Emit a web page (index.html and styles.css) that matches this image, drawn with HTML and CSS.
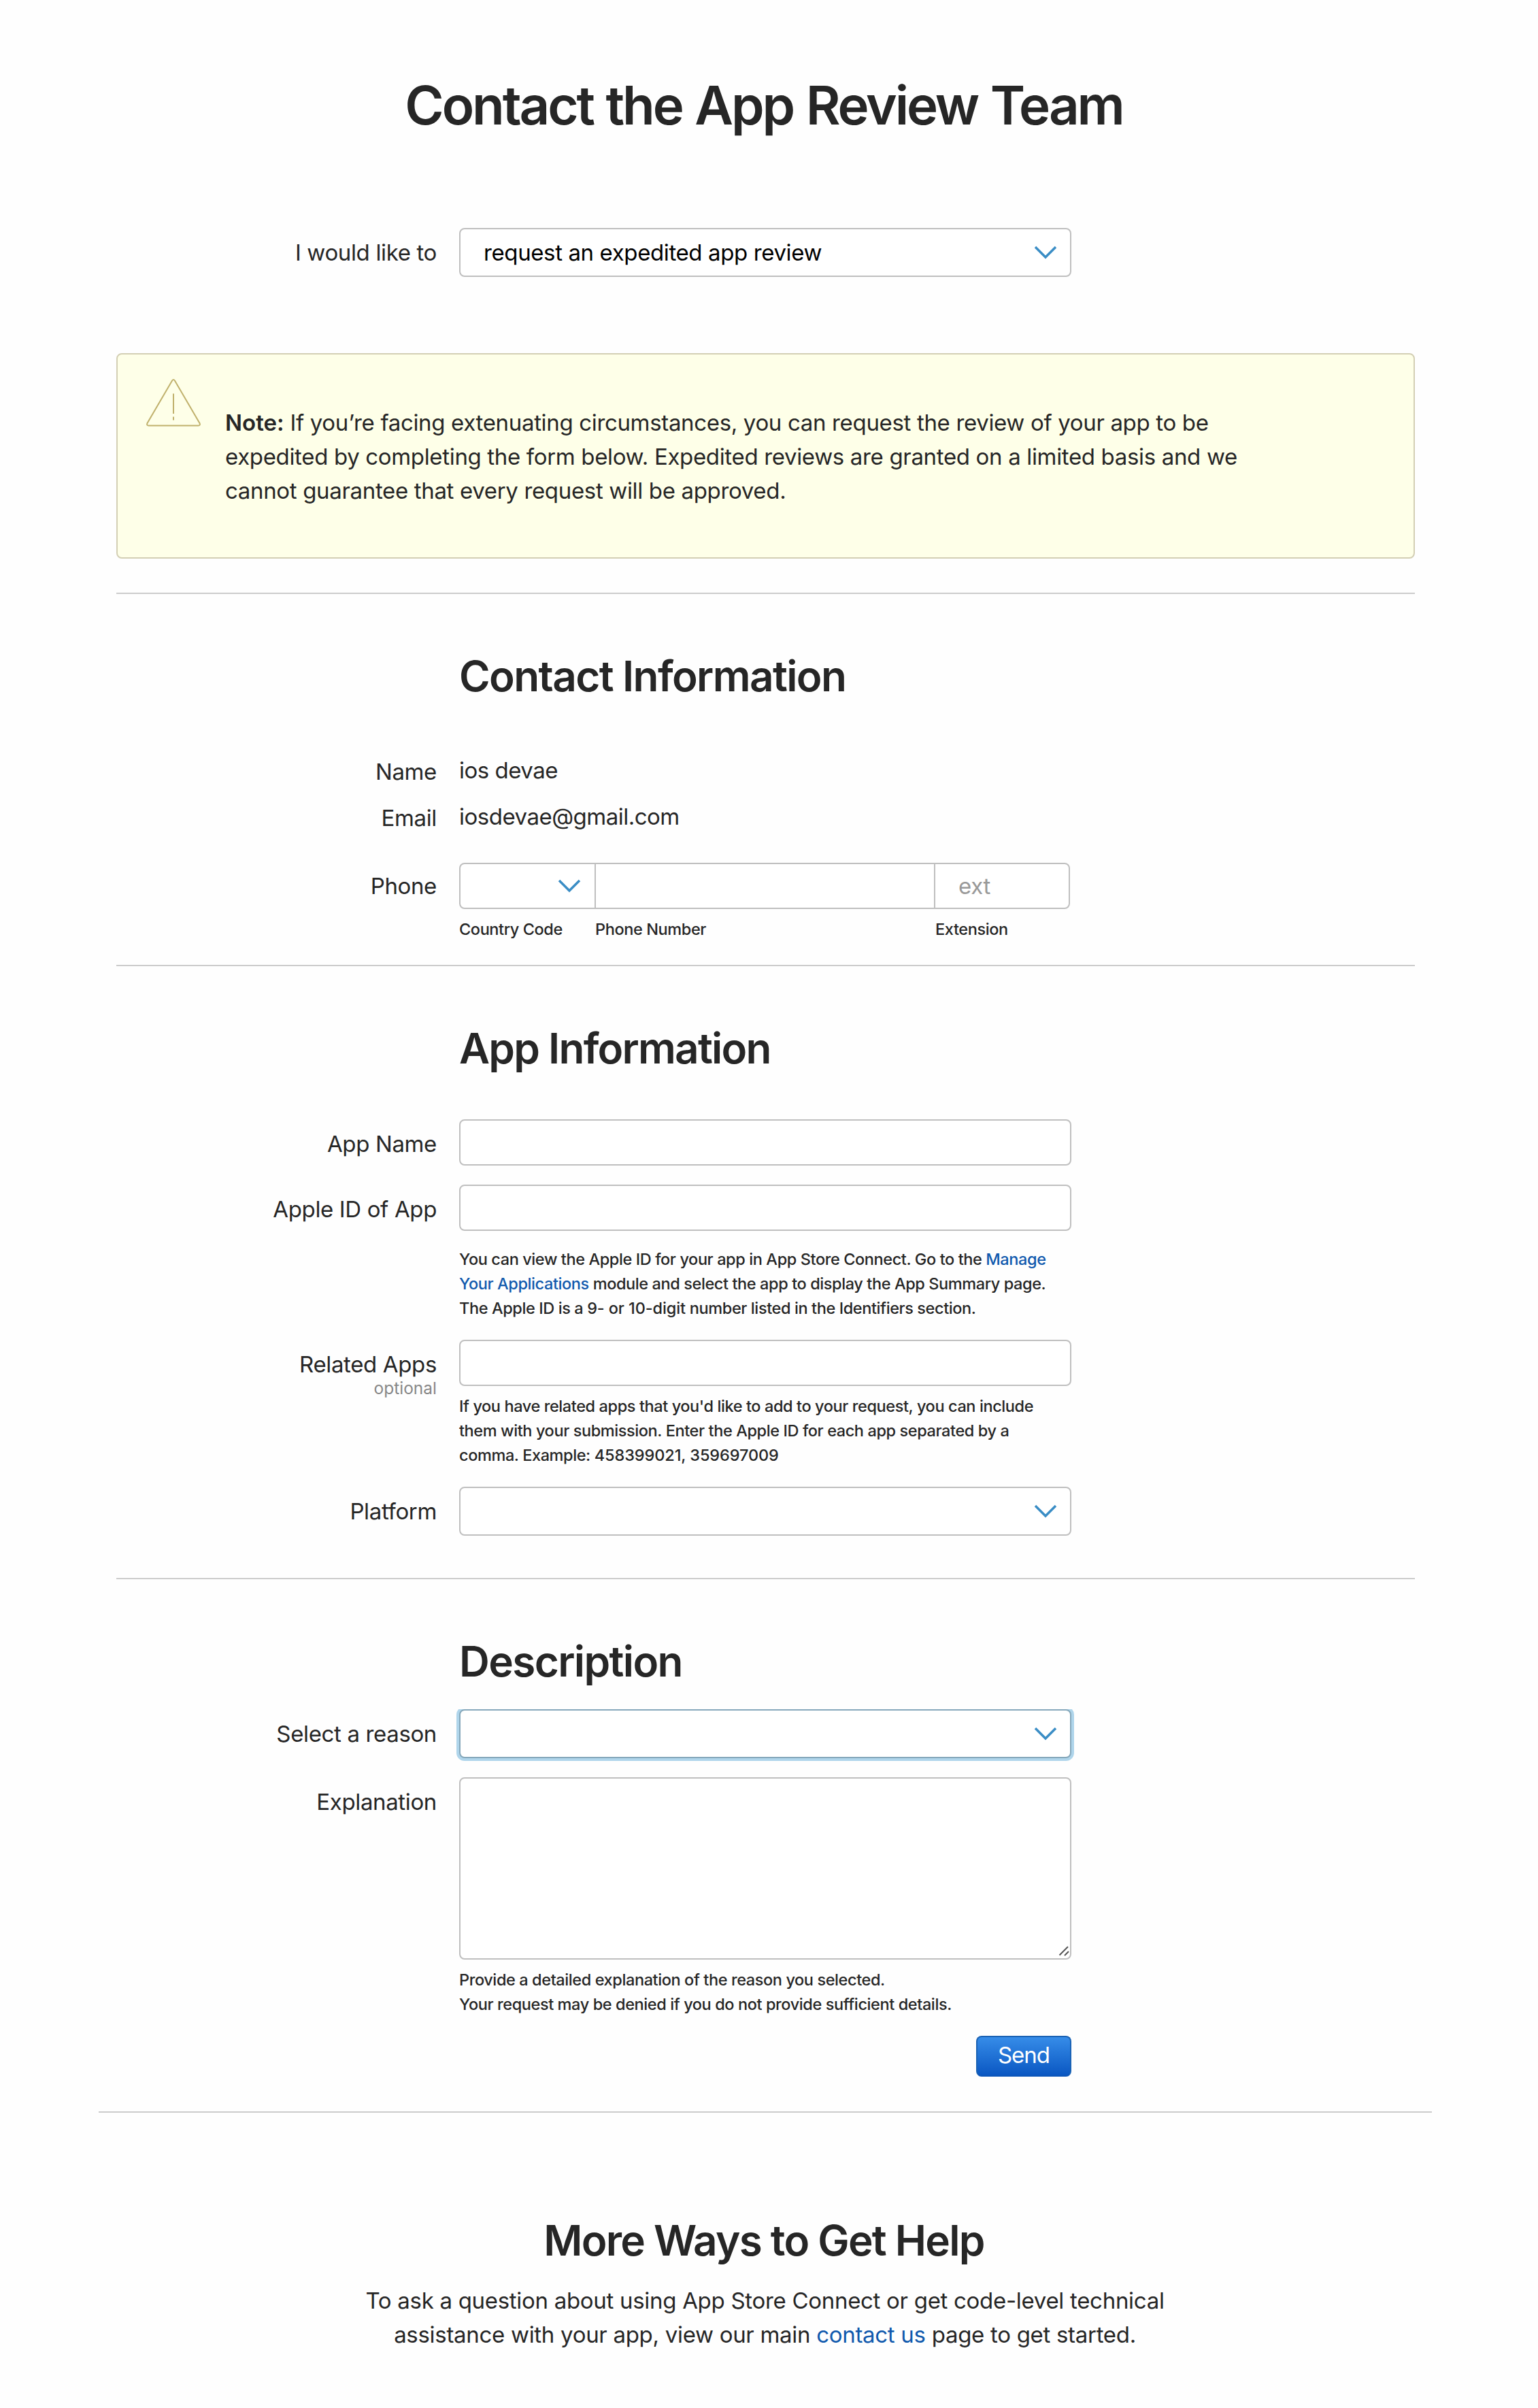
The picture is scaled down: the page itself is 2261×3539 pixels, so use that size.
FILE: index.html
```html
<!DOCTYPE html>
<html lang="en">
<head>
<meta charset="utf-8">
<title>Contact the App Review Team</title>
<link rel="stylesheet" href="styles.css">
</head>
<body>
<svg class="sprite" width="0" height="0" aria-hidden="true">
  <symbol id="chevron" viewBox="0 0 34 20"><path d="M2 2 L17 17 L32 2" fill="none" stroke="#3a8dc5" stroke-width="3.5"/></symbol>
</svg>
<main class="page">
  <h1 class="page-title">Contact the App Review Team</h1>

  <form class="form">
    <div class="row topic">
      <label class="label">I would like to</label>
      <div class="control select"><span class="value">request an expedited app review</span><svg class="chevron"><use href="#chevron"/></svg></div>
    </div>

    <div class="notice">
      <svg class="warning" viewBox="0 0 80 72" fill="none" stroke="#c0b16c" stroke-width="2">
        <path d="M38 2.500 Q40 -0.500 42 2.500 L78.500 65 Q79.800 68.500 76.500 68.500 L3.500 68.500 Q0.200 68.500 1.500 65 Z"/>
        <path d="M40 21.500 V51 M40 55.500 V60.500"/>
      </svg>
      <p class="notice-text"><strong>Note:</strong> If you’re facing extenuating circumstances, you can request the review of your app to be<br>expedited by completing the form below. Expedited reviews are granted on a limited basis and we<br>cannot guarantee that every request will be approved.</p>
    </div>

    <section class="section contact">
      <h2 class="heading">Contact Information</h2>
      <div class="row info"><span class="label">Name</span><span class="text">ios devae</span></div>
      <div class="row info"><span class="label">Email</span><span class="text">iosdevae@gmail.com</span></div>
      <div class="row phone">
        <span class="label">Phone</span>
        <div class="phone-group">
          <div class="control phone-box">
            <div class="code"><svg class="chevron"><use href="#chevron"/></svg></div>
            <div class="number"></div>
            <div class="ext">ext</div>
          </div>
          <div class="captions"><span>Country Code</span><span>Phone Number</span><span>Extension</span></div>
        </div>
      </div>
    </section>

    <section class="section app">
      <h2 class="heading">App Information</h2>
      <div class="row"><span class="label">App Name</span><div class="control input"></div></div>
      <div class="row apple-id">
        <span class="label">Apple ID of App</span>
        <div class="field"><div class="control input"></div>
          <p class="help id-help">You can view the Apple ID for your app in App Store Connect. Go to the <a>Manage</a><br><a>Your Applications</a> module and select the app to display the App Summary page.<br>The Apple ID is a <span class="digits">9- or 10-digit</span> number listed in the Identifiers section.</p></div>
      </div>
      <div class="row related">
        <span class="label">Related Apps<small class="optional">optional</small></span>
        <div class="field"><div class="control input"></div>
          <p class="help">If you have related apps that you'd like to add to your request, you can include<br>them with your submission. Enter the Apple ID for each app separated by a<br>comma. Example: <span class="digits">458399021, 359697009</span></p></div>
      </div>
      <div class="row platform"><span class="label">Platform</span><div class="control select"><svg class="chevron"><use href="#chevron"/></svg></div></div>
    </section>

    <section class="section description">
      <h2 class="heading">Description</h2>
      <div class="row reason"><span class="label">Select a reason</span><div class="control select focused"><svg class="chevron"><use href="#chevron"/></svg></div></div>
      <div class="row explanation">
        <span class="label">Explanation</span>
        <div class="field"><div class="control textarea"><svg class="grip" viewBox="0 0 16 16" fill="none" stroke="#555" stroke-width="2"><path d="M1.500 15.500 L14 3 M9 16 L15 10"/></svg></div>
          <p class="help">Provide a detailed explanation of the reason you selected.<br>Your request may be denied if you do not provide sufficient details.</p>
          <button class="send" type="button">Send</button></div>
      </div>
    </section>
  </form>

  <footer class="more">
    <h2 class="more-title">More Ways to Get Help</h2>
    <p class="more-text">To ask a question about using App Store Connect or get code-level technical<br>assistance with your app, view our main <a>contact us</a> page to get started.</p>
  </footer>
</main>
</body>
</html>
```
FILE: styles.css
```css
* { box-sizing: border-box; }
html, body { margin: 0; background: #fefefe; }
body {
  font-family: Inter, "Liberation Sans", sans-serif;
  font-size: 33px;
  line-height: 50px;
  letter-spacing: -0.34px;
  color: #262626;
}
h1, h2, p { margin: 0; }
a { color: #1059ad; text-decoration: none; }
.sprite { display: block; }

.page { width: 1960px; margin-left: 145px; height: 3539px; }
.page-title {
  padding: 107px 4px 0 0;
  font-size: 78px; line-height: 96px; font-weight: 600;
  text-align: center; letter-spacing: -3.1px; word-spacing: 2px;
}
.form { padding: 0 25px 0 26px; }

.row { display: grid; grid-template-columns: 472px 900px; column-gap: 32px; align-items: start; }
.label { text-align: right; padding: 11px 1px 0 0; letter-spacing: -0.36px; }
.control { border: 2px solid #bfbfbf; border-radius: 8px; background: #fff; }
.input { height: 68px; }
.select {
  height: 72px; padding: 0 19px 0 34px;
  display: flex; align-items: center; justify-content: flex-end;
  color: #000;
}
.value { flex: 1; line-height: 68px; letter-spacing: -0.39px; }
.chevron { width: 34px; height: 20px; display: block; flex: none; }

.topic { margin-top: 132px; }
.notice {
  height: 302px; margin-top: 112px; padding: 36px 42px;
  display: flex; gap: 36px;
  border: 2px solid #d3cfb4; border-radius: 8px; background: #feffe8;
}
.warning { width: 80px; height: 72px; flex: none; overflow: visible; }
.notice-text { padding-top: 39px; white-space: nowrap; }
.notice-text strong { font-weight: 600; letter-spacing: 0; }

.section { border-top: 2px solid #ccc; }
.contact { margin-top: 50px; height: 547px; }
.app { height: 901px; }
.description { height: 784px; }
.heading {
  margin-left: 504px; padding-top: 81px;
  font-size: 62px; line-height: 80px; font-weight: 600;
  letter-spacing: -1.6px; white-space: nowrap;
}

.contact .heading { margin-bottom: 73px; }
.info { height: 68px; }
.info .text { letter-spacing: -0.5px; }
.info .label { padding-top: 2px; }
.phone { margin-top: 25px; }
.phone .label { padding-top: 9px; }
.phone-box { width: 898px; height: 68px; display: flex; }
.code { width: 197px; padding: 22px 20px 0 0; display: flex; justify-content: flex-end; align-items: flex-start; }
.number { width: 501px; border: solid #bfbfbf; border-width: 0 2px; }
.ext { padding: 7px 0 0 34px; color: #999; }
.captions { display: grid; grid-template-columns: 200px 500px 200px; margin-top: 12px; }
.captions, .help {
  font-size: 23.500px; line-height: 36px; font-weight: 500;
  letter-spacing: -0.4px; white-space: nowrap;
}
.digits { letter-spacing: -0.1px; }

.app .heading { margin-bottom: 64px; letter-spacing: -1.75px; }
.apple-id { margin-top: 28px; }
.id-help { padding-top: 24px; }
.related { margin-top: 28px; }
.related .help { padding-top: 12px; }
.optional { display: block; font-size: 24.500px; line-height: 28px; margin-top: -4px; letter-spacing: 0; color: #888; }
.platform { margin-top: 28px; }

.description .heading { margin-bottom: 30px; }
.focused {
  border-color: #86a8bb;
  box-shadow: 0 0 0 4px #afd5eb;
  clip-path: inset(0 -4px -4px -4px);
}
.explanation { margin-top: 28px; }
.textarea { height: 268px; display: flex; justify-content: flex-end; align-items: flex-end; padding: 0 1px 4px 0; }
.grip { width: 16px; height: 16px; overflow: visible; }
.explanation .help { padding-top: 12px; }
.send {
  display: block; width: 140px; height: 60px; margin: 28px 0 0 auto; padding: 0 0 5px;
  border: 2px solid #1a62b4; border-bottom-color: #0b55b8; border-radius: 8px;
  background: linear-gradient(#368ce8, #0a57c2);
  color: #fff; font: 400 33px/50px Inter, "Liberation Sans", sans-serif; letter-spacing: -1px;
}

.more { border-top: 2px solid #ccc; text-align: center; }
.more-title { padding: 148px 4px 0 0; font-size: 62px; line-height: 80px; font-weight: 600; letter-spacing: -1.75px; }
.more-text { padding: 23px 1px 0 0; letter-spacing: -0.3px; }
```
